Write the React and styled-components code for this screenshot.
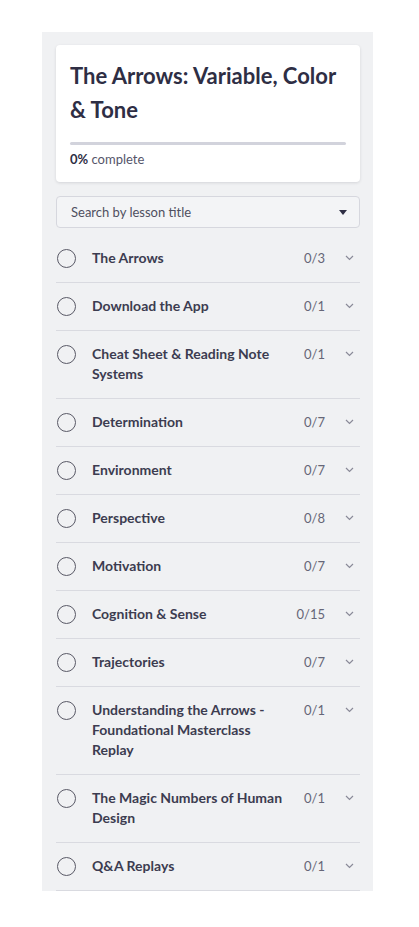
import React from "react";
import styled, { createGlobalStyle } from "styled-components";

const Global = createGlobalStyle`
  html, body { margin: 0; padding: 0; background: #ffffff; }
  body { font-family: Lato, "Noto Sans", sans-serif; -webkit-font-smoothing: antialiased; }
  * { box-sizing: border-box; }
`;

const Page = styled.div`
  padding: 32px 46px 40px 42px;
`;

const Panel = styled.aside`
  background: #f0f1f3;
  padding: 13px 13px 0 14px;
  display: flex;
  flex-direction: column;
`;

const Card = styled.section`
  background: #ffffff;
  border-radius: 4px;
  box-shadow: 0 1px 3px rgba(40, 40, 60, 0.14);
  padding: 14px 14px 14px 14px;
`;

const Title = styled.h1`
  margin: 0;
  font-size: 22px;
  line-height: 34px;
  font-weight: 700;
  color: #2e2e44;
`;

const Bar = styled.div`
  margin-top: 15px;
  height: 3px;
  border-radius: 2px;
  background: #d2d3dc;
  overflow: hidden;
`;

const Fill = styled.div`
  height: 100%;
  background: #4a4ae0;
`;

const Progress = styled.p`
  margin: 5px 0 0 0;
  font-size: 13px;
  line-height: 18px;
  color: #55556a;
  strong { color: #2e2e44; font-weight: 700; }
`;

const Search = styled.div`
  margin-top: 14px;
  height: 32px;
  border: 1px solid #d6d7de;
  border-radius: 4px;
  background: #f3f4f6;
  display: flex;
  align-items: center;
  justify-content: space-between;
  padding: 0 12px 0 14px;
  font-size: 13px;
  color: #4f4f60;
`;

const Caret = styled.span`
  width: 0;
  height: 0;
  border-left: 4px solid transparent;
  border-right: 4px solid transparent;
  border-top: 5px solid #2e2e44;
`;

const List = styled.ul`
  list-style: none;
  margin: 7px 0 0 0;
  padding: 0;
`;

const Row = styled.li`
  display: flex;
  align-items: flex-start;
  padding: 13px 0 14px 1px;
  border-bottom: 1px solid #d9dae0;
`;

const Circle = styled.span`
  flex: 0 0 auto;
  width: 19px;
  height: 19px;
  margin-top: 1px;
  border: 1.6px solid #595966;
  border-radius: 50%;
`;

const RowTitle = styled.span`
  flex: 1 1 auto;
  margin-left: 16px;
  font-size: 14px;
  line-height: 20px;
  font-weight: 700;
  color: #3c3c50;
  padding-right: 8px;
`;

const Count = styled.span`
  flex: 0 0 auto;
  width: 30px;
  text-align: right;
  font-size: 13px;
  line-height: 20px;
  color: #666677;
`;

const Chevron = styled.svg`
  flex: 0 0 auto;
  margin: 7px 6px 0 20px;
  width: 9px;
  height: 6px;
`;

const lessons = [
  ["The Arrows", "0/3"],
  ["Download the App", "0/1"],
  ["Cheat Sheet & Reading Note Systems", "0/1"],
  ["Determination", "0/7"],
  ["Environment", "0/7"],
  ["Perspective", "0/8"],
  ["Motivation", "0/7"],
  ["Cognition & Sense", "0/15"],
  ["Trajectories", "0/7"],
  ["Understanding the Arrows - Foundational Masterclass Replay", "0/1"],
  ["The Magic Numbers of Human Design", "0/1"],
  ["Q&A Replays", "0/1"],
];

export default function App() {
  return (
    <Page>
      <Global />
      <Panel>
        <Card>
          <Title>The Arrows: Variable, Color &amp; Tone</Title>
          <Bar>
            <Fill style={{ width: "0%" }} />
          </Bar>
          <Progress>
            <strong>0%</strong> complete
          </Progress>
        </Card>
        <Search>
          <span>Search by lesson title</span>
          <Caret />
        </Search>
        <List>
          {lessons.map(([t, c]) => (
            <Row key={t}>
              <Circle />
              <RowTitle>{t}</RowTitle>
              <Count>{c}</Count>
              <Chevron viewBox="0 0 9 6">
                <path d="M1 1l3.5 3.5L8 1" fill="none" stroke="#8a8a98" strokeWidth="1.2" />
              </Chevron>
            </Row>
          ))}
        </List>
      </Panel>
    </Page>
  );
}
